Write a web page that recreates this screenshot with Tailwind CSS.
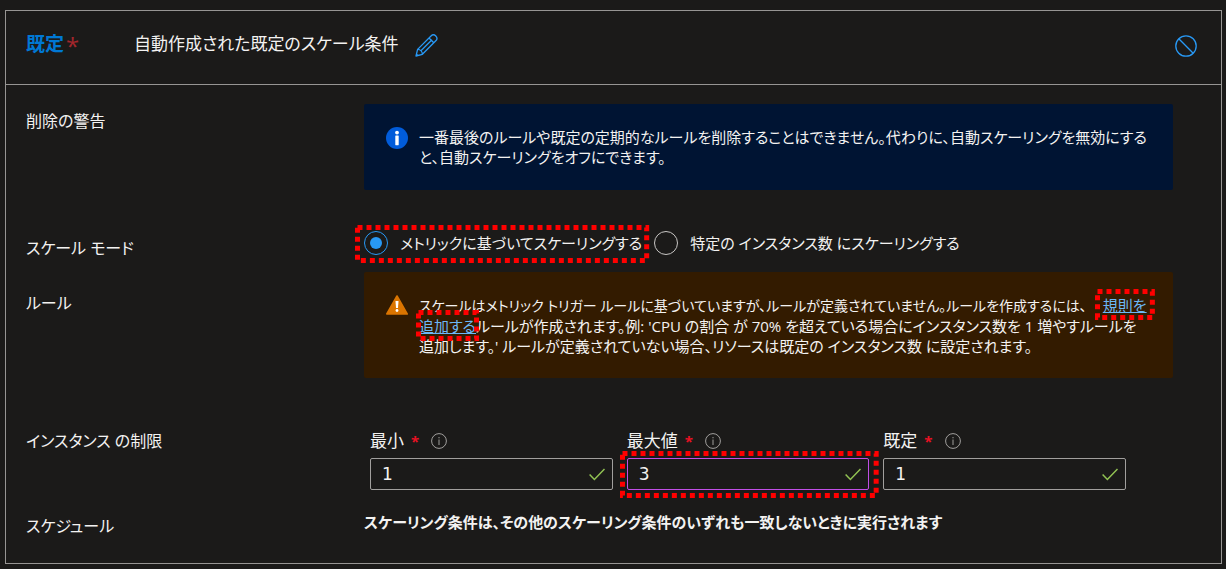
<!DOCTYPE html>
<html lang="ja">
  <head>
    <meta charset="UTF-8" />
    <meta name="viewport" content="width=device-width, initial-scale=1.0" />
    <title>自動スケーリング</title>
    <script src="https://cdn.jsdelivr.net/npm/@tailwindcss/browser@4"></script>
    <style>
      body {
        font-family: "Open Sans", "Noto Sans CJK JP", sans-serif;
        font-feature-settings: "palt", "kern";
      }
    </style>
  </head>
  <body class="bg-[#1b1a19] text-[#f3f2f1] text-[15px] leading-5 min-h-screen px-[5px] pt-[10px]">
    <main class="border border-[#979593] mr-[-1px]">
      <header class="flex items-center h-[74px] border-b border-[#979593] pl-5 pr-6 pb-1">
        <h1 class="w-[108px] text-[19px] leading-6 font-bold text-[#0078d4] pb-1">
          既定<span class="text-[#a4262c] font-normal text-[24px] leading-5 align-[-4px] ml-[2px]">*</span>
        </h1>
        <p class="text-[17px] leading-6 pb-1">自動作成された既定のスケール条件</p>
        <button aria-label="名前の編集" class="ml-4">
          <svg class="size-[23px]" viewBox="0 0 23 23" fill="none" stroke="#2899f5" stroke-width="1.3" stroke-linejoin="round">
            <path d="M1 22l1.600-6.600L16 2a3.350 3.350 0 0 1 4.800 4.800L7.400 20.300z" />
            <path d="M14 4l4.800 4.800M2.600 15.400c2.700.1 4.800 2.200 4.800 4.900M5.700 17L17 5.800M1.400 20.200l1.500 1.400" />
          </svg>
        </button>
        <button aria-label="無効" class="ml-auto">
          <svg class="size-[22px]" viewBox="0 0 22 22" fill="none" stroke="#2899f5" stroke-width="1.300">
            <circle cx="11" cy="11" r="10.200" />
            <path d="M3.800 3.800l14.400 14.400" />
          </svg>
        </button>
      </header>

      <div class="pl-5 pr-12 pt-[19px] pb-[27px]">
        <section class="flex items-start">
          <h2 class="w-[338px] shrink-0 pt-[7px] text-[16px]">削除の警告</h2>
          <div class="flex-1 min-w-0 flex items-start gap-[11px] bg-[#001433] rounded-xs px-[22px] pt-[23px] pb-[23px]">
            <svg class="size-[22px] shrink-0" viewBox="0 0 22 22">
              <circle cx="11" cy="11" r="11" fill="#015cda" />
              <circle cx="11" cy="5.600" r="1.900" fill="#fff" />
              <rect x="9.300" y="8.600" width="3.400" height="9.600" rx=".4" fill="#fff" />
            </svg>
            <p class="whitespace-nowrap">
              一番最後のルールや既定の定期的なルールを削除することはできません。代わりに、自動スケーリングを無効にする<br />と、自動スケーリングをオフにできます。
            </p>
          </div>
        </section>

        <section class="flex items-start mt-[41px]">
          <h2 class="w-[338px] shrink-0 pt-[7px] text-[16px]">スケール モード</h2>
          <div class="flex items-center gap-3">
            <label class="relative flex items-center gap-3">
              <input
                type="radio"
                name="mode"
                checked
                class="appearance-none size-6 shrink-0 grid place-content-center rounded-full border border-[#2899f5] before:size-3 before:rounded-full before:bg-[#2899f5]"
              />
              メトリックに基づいてスケーリングする
              <svg class="absolute -left-[9px] -top-[6px] w-[calc(100%+16px)] h-[38px] overflow-visible pointer-events-none">
                <rect x="2.500" y="2.500" class="w-[calc(100%-5px)] h-[calc(100%-5px)]" fill="none" stroke="#f00" stroke-width="5" stroke-dasharray="5 4" />
              </svg>
            </label>
            <label class="flex items-center gap-3">
              <input
                type="radio"
                name="mode"
                class="appearance-none size-6 shrink-0 rounded-full border border-[#c8c6c4]"
              />
              特定の インスタンス数 にスケーリングする
            </label>
          </div>
        </section>

        <section class="flex items-start mt-[14px]">
          <h2 class="w-[338px] shrink-0 pt-[21px] text-[16px]">ルール</h2>
          <div class="flex-1 min-w-0 flex items-start gap-[11px] bg-[#331b00] rounded-xs px-[22px] pt-[23px] pb-[22px]">
            <svg class="w-[22px] h-5 shrink-0" viewBox="0 0 22 20">
              <path d="M11 1L21.200 19H.8z" fill="#db7500" stroke="#db7500" stroke-width="1.600" stroke-linejoin="round" />
              <path d="M9.500 6h3l-.5 7h-2z" fill="#fff" />
              <circle cx="11" cy="15.500" r="1.400" fill="#fff" />
            </svg>
            <p class="whitespace-nowrap first-line:text-[14px]">
              スケールはメトリック トリガー ルールに基づいていますが、ルールが定義されていません。ルールを作成するには、<a href="#" class="relative inline-block ml-4 text-[#6cb8f6] underline">規則を<svg class="absolute -left-2 -top-[6px] w-[calc(100%+16px)] h-[31px] overflow-visible pointer-events-none"><rect x="2.500" y="2.500" class="w-[calc(100%-5px)] h-[calc(100%-5px)]" fill="none" stroke="#f00" stroke-width="5" stroke-dasharray="5 4" /></svg></a><br />
              <a href="#" class="relative inline-block text-[#6cb8f6] underline">追加する<svg class="absolute -left-[3px] -top-[6px] w-[calc(100%+6px)] h-[31px] overflow-visible pointer-events-none"><rect x="2.500" y="2.500" class="w-[calc(100%-5px)] h-[calc(100%-5px)]" fill="none" stroke="#f00" stroke-width="5" stroke-dasharray="5 4" /></svg></a>ルールが作成されます。例: 'CPU の割合 が 70% を超えている場合にインスタンス数を 1 増やすルールを<br />
              追加します。' ルールが定義されていない場合、リソースは既定の インスタンス数 に設定されます。
            </p>
          </div>
        </section>

        <section class="flex items-start mt-[53px]">
          <h2 class="w-[338px] shrink-0 text-[16px]">インスタンス の制限</h2>
          <div class="flex-1 max-w-[762px] pl-[6px] grid grid-cols-3 gap-[14px]">
            <div>
              <div class="flex items-center">
                <label for="min" class="text-[17px]">最小<span class="text-[#e81123] text-[15px] font-bold ml-[7px]">*</span></label>
                <svg class="size-4 ml-3" viewBox="0 0 16 16" fill="none" stroke="#a19f9d">
                  <circle cx="8" cy="8" r="7.400" />
                  <path d="M8 6.500v5.500M8 4v1.300" />
                </svg>
              </div>
              <div class="relative mt-[7px]">
                <input id="min" type="text" value="1" class="block w-full h-8 pl-[11px] pr-9 border border-[#a19f9d] rounded-xs bg-transparent text-[17px] font-['DejaVu_Sans']" />
                <svg class="absolute right-2 top-[10px] w-4 h-[13px]" viewBox="0 0 16 13" fill="none" stroke="#92c353" stroke-width="1.500">
                  <path d="M.6 6.600l4.800 4.900L15.500 1" />
                </svg>
              </div>
            </div>
            <div>
              <div class="flex items-center">
                <label for="max" class="text-[17px]">最大値<span class="text-[#e81123] text-[15px] font-bold ml-[7px]">*</span></label>
                <svg class="size-4 ml-3" viewBox="0 0 16 16" fill="none" stroke="#a19f9d">
                  <circle cx="8" cy="8" r="7.400" />
                  <path d="M8 6.500v5.500M8 4v1.300" />
                </svg>
              </div>
              <div class="relative mt-[7px]">
                <input id="max" type="text" value="3" class="block w-full h-8 pl-[11px] pr-9 border border-[#c14ee6] rounded-xs bg-transparent text-[17px] font-['DejaVu_Sans']" />
                <svg class="absolute right-2 top-[10px] w-4 h-[13px]" viewBox="0 0 16 13" fill="none" stroke="#92c353" stroke-width="1.500">
                  <path d="M.6 6.600l4.800 4.900L15.500 1" />
                </svg>
                <svg class="absolute -left-[7px] -top-[7px] w-[calc(100%+16px)] h-[47px] overflow-visible pointer-events-none">
                  <rect x="2.500" y="2.500" class="w-[calc(100%-5px)] h-[calc(100%-5px)]" fill="none" stroke="#f00" stroke-width="5" stroke-dasharray="5 4" />
                </svg>
              </div>
            </div>
            <div>
              <div class="flex items-center">
                <label for="default" class="text-[17px]">既定<span class="text-[#e81123] text-[15px] font-bold ml-[7px]">*</span></label>
                <svg class="size-4 ml-3" viewBox="0 0 16 16" fill="none" stroke="#a19f9d">
                  <circle cx="8" cy="8" r="7.400" />
                  <path d="M8 6.500v5.500M8 4v1.300" />
                </svg>
              </div>
              <div class="relative mt-[7px]">
                <input id="default" type="text" value="1" class="block w-full h-8 pl-[11px] pr-9 border border-[#a19f9d] rounded-xs bg-transparent text-[17px] font-['DejaVu_Sans']" />
                <svg class="absolute right-2 top-[10px] w-4 h-[13px]" viewBox="0 0 16 13" fill="none" stroke="#92c353" stroke-width="1.500">
                  <path d="M.6 6.600l4.800 4.900L15.500 1" />
                </svg>
              </div>
            </div>
          </div>
        </section>

        <section class="flex items-start mt-[22px]">
          <h2 class="w-[338px] shrink-0 pt-1 text-[16px]">スケジュール</h2>
          <p class="font-bold">スケーリング条件は、その他のスケーリング条件のいずれも一致しないときに実行されます</p>
        </section>
      </div>
    </main>
  </body>
</html>
